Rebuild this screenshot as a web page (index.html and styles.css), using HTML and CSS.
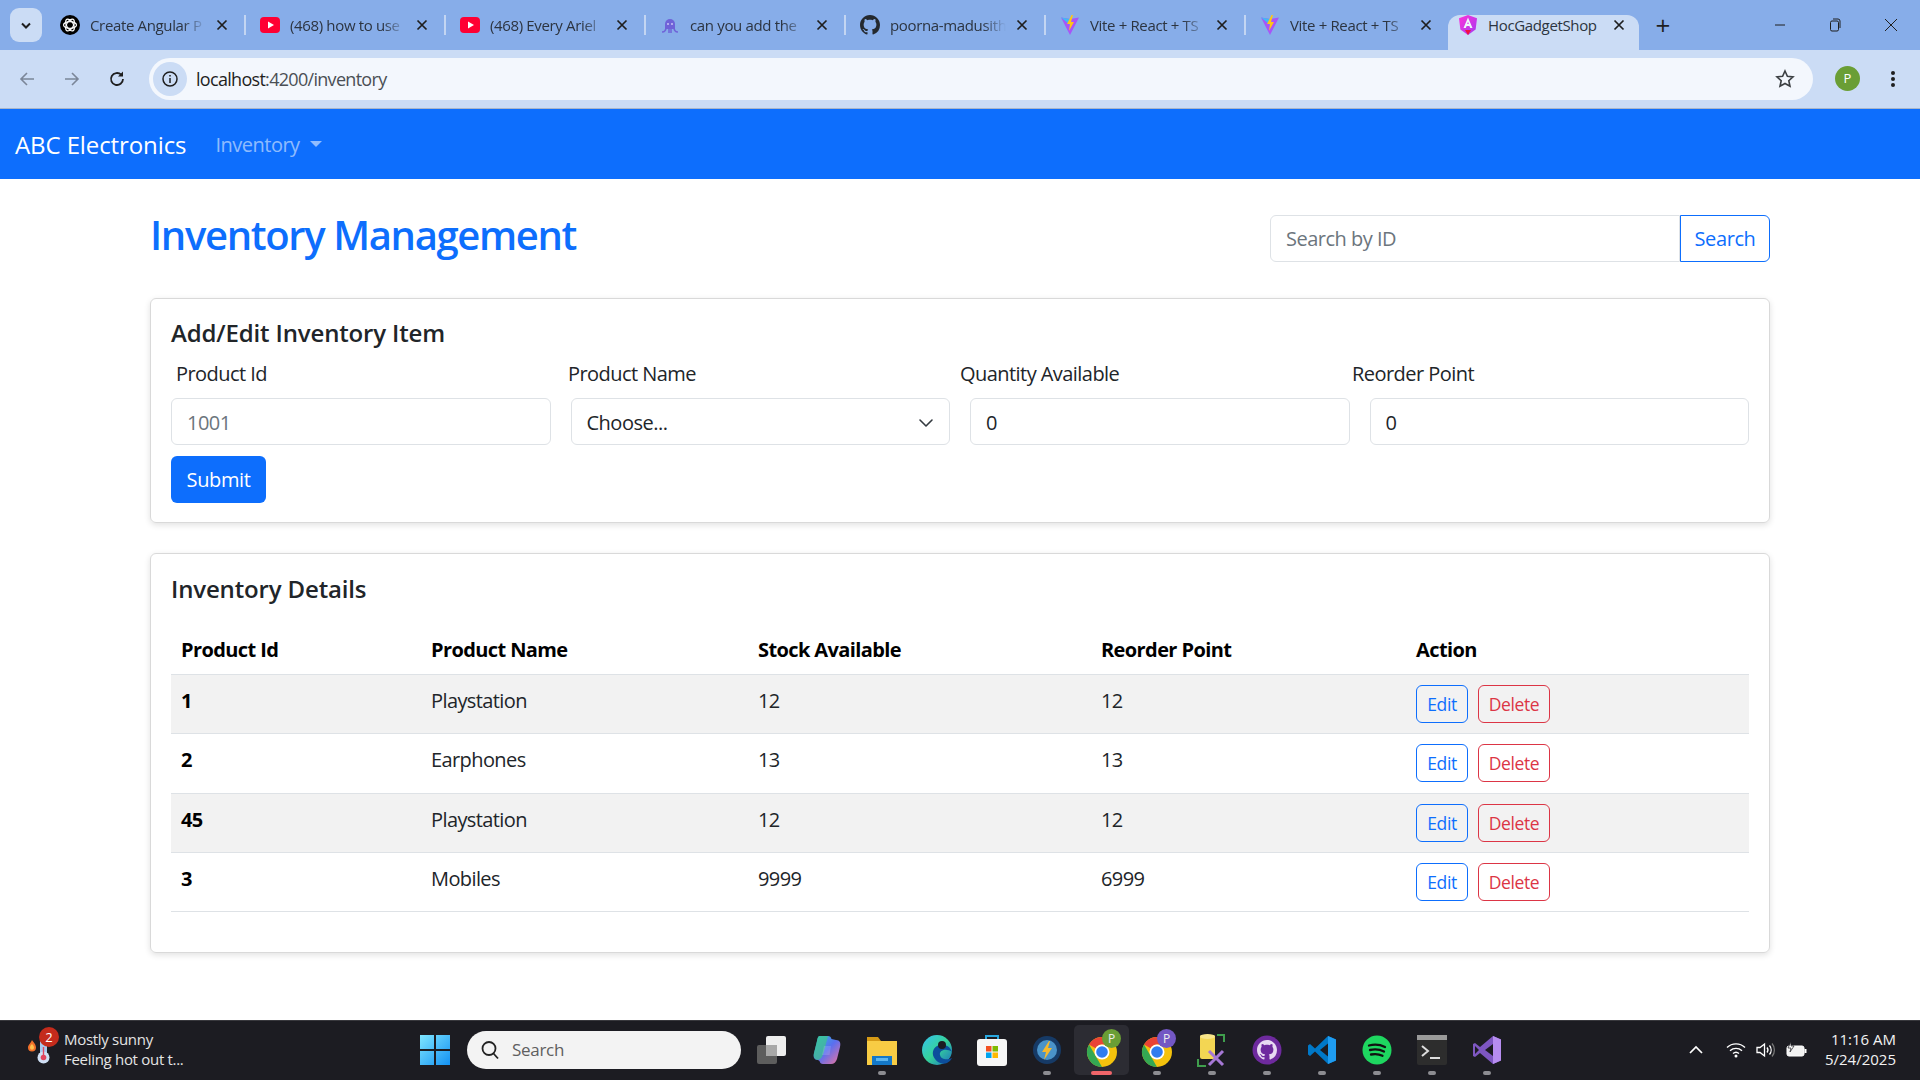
FILE: index.html
```html
<!DOCTYPE html>
<html lang="en">

<head>
  <meta charset="UTF-8">
  <title>HocGadgetShop</title>
  <link rel="stylesheet" href="styles.css">
</head>

<body>
  <svg class="defs" width="0" height="0">
    <symbol id="gh" viewBox="0 0 16 16">
      <path d="M8 0C3.58 0 0 3.58 0 8c0 3.54 2.29 6.53 5.47 7.59.4.07.55-.17.55-.38 0-.19-.01-.82-.01-1.49-2.01.37-2.53-.49-2.69-.94-.09-.23-.48-.94-.82-1.13-.28-.15-.68-.52-.01-.53.63-.01 1.08.58 1.23.82.72 1.21 1.87.87 2.33.66.07-.52.28-.87.51-1.07-1.78-.2-3.64-.89-3.64-3.95 0-.87.31-1.59.82-2.15-.08-.2-.36-1.02.08-2.12 0 0 .67-.21 2.2.82.64-.18 1.32-.27 2-.27.68 0 1.36.09 2 .27 1.53-1.04 2.2-.82 2.2-.82.44 1.1.16 1.92.08 2.12.51.56.82 1.27.82 2.15 0 3.07-1.87 3.75-3.65 3.95.29.25.54.73.54 1.48 0 1.07-.01 1.93-.01 2.2 0 .21.15.46.55.38A8.013 8.013 0 0016 8c0-4.42-3.58-8-8-8z"/>
    </symbol>
    <symbol id="yt" viewBox="0 0 20 20">
      <rect y="2" width="20" height="16" rx="4" fill="#ff0033"/>
      <path d="M8 6.500v7l6-3.500z" fill="#fff"/>
    </symbol>
    <symbol id="vite" viewBox="0 0 20 20">
      <path d="M1 2.500 10 4l9-1.500L10 20z" fill="#a855f7"/>
      <path d="M1 2.500 10 4v6z" fill="#41b9f5"/>
      <path d="M11.500 0 7 9h3l-1 7 5-9h-3l2-7z" fill="#ffc517"/>
    </symbol>
    <symbol id="chrome" viewBox="0 0 32 32">
      <circle cx="16" cy="16" r="15" fill="#f4c20d"/>
      <path d="M16 1a15 15 0 0 1 13 7.500H16a7.500 7.500 0 0 0-6.500 3.750L3 8.500A15 15 0 0 1 16 1z" fill="#ea4335"/>
      <path d="M3 8.500l6.500 11.250L16 31A15 15 0 0 1 3 8.500z" fill="#34a853"/>
      <circle cx="16" cy="16" r="7.500" fill="#fff"/>
      <circle cx="16" cy="16" r="5.800" fill="#2f7cf0"/>
    </symbol>
    <symbol id="x" viewBox="0 0 12 12">
      <path d="M1.500 1.500l9 9M10.500 1.500l-9 9" fill="none" stroke="#1f1f1f" stroke-width="1.700"/>
    </symbol>
  </svg>

  <div class="tabstrip">
    <button class="tab-search">
      <svg width="12" height="8" viewBox="0 0 12 8"><path d="M2 1.500 6 5.500l4-4" fill="none" stroke="#1f1f1f" stroke-width="2"/></svg>
    </button>
    <div class="tabs">
      <div class="tab">
        <svg class="fav" viewBox="0 0 20 20"><circle cx="10" cy="10" r="10" fill="#000"/><g fill="none" stroke="#fff" stroke-width="1.200"><ellipse cx="10" cy="10" rx="6.500" ry="3.400"/><ellipse cx="10" cy="10" rx="6.500" ry="3.400" transform="rotate(60 10 10)"/><ellipse cx="10" cy="10" rx="6.500" ry="3.400" transform="rotate(120 10 10)"/></g></svg>
        <span class="tab-title">Create Angular P</span><svg class="tab-close"><use href="#x"/></svg>
      </div>
      <div class="tab">
        <svg class="fav"><use href="#yt"/></svg>
        <span class="tab-title">(468) how to use</span><svg class="tab-close"><use href="#x"/></svg>
      </div>
      <div class="tab">
        <svg class="fav"><use href="#yt"/></svg>
        <span class="tab-title">(468) Every Ariel</span><svg class="tab-close"><use href="#x"/></svg>
      </div>
      <div class="tab">
        <svg class="fav" viewBox="0 0 20 20"><path d="M5 9a5 5 0 0 1 10 0v5H5z" fill="#6f63d8"/><path d="M6 12c0 3.500-1.500 5-4 5M9 13v5M11 13v5M14 12c0 3.500 1.500 5 4 5" fill="none" stroke="#6f63d8" stroke-width="1.500"/><circle cx="8" cy="9" r="1" fill="#c9c4f5"/><circle cx="12" cy="9" r="1" fill="#c9c4f5"/></svg>
        <span class="tab-title">can you add the</span><svg class="tab-close"><use href="#x"/></svg>
      </div>
      <div class="tab">
        <svg class="fav" fill="#24292f"><use href="#gh"/></svg>
        <span class="tab-title">poorna-madusith</span><svg class="tab-close"><use href="#x"/></svg>
      </div>
      <div class="tab">
        <svg class="fav"><use href="#vite"/></svg>
        <span class="tab-title">Vite + React + TS</span><svg class="tab-close"><use href="#x"/></svg>
      </div>
      <div class="tab tab-last">
        <svg class="fav"><use href="#vite"/></svg>
        <span class="tab-title">Vite + React + TS</span><svg class="tab-close"><use href="#x"/></svg>
      </div>
      <div class="tab tab-active">
        <svg class="fav" viewBox="0 0 20 20"><defs><linearGradient id="ng" x1="0" y1="0" x2="1" y2="1"><stop offset="0" stop-color="#ff31d9"/><stop offset="1" stop-color="#a33bf0"/></linearGradient></defs><path d="M10 0 1 3.200l1.400 11.300L10 20l7.600-5.500L19 3.200z" fill="url(#ng)"/><path d="M10 2.500 5.500 13h2.300l.8-2h2.800l.8 2h2.300z" fill="#eef3fb"/><path d="M7 15h6l-3 5z" fill="#f0123f"/><path d="M9.200 9 10 6.800l.8 2.200z" fill="#d43de8"/></svg>
        <span class="tab-title">HocGadgetShop</span><svg class="tab-close"><use href="#x"/></svg>
      </div>
      <div class="tab-new">+</div>
    </div>
    <div class="win-btns">
      <svg width="12" height="12" viewBox="0 0 12 12"><path d="M1 6h10" stroke="#1f1f1f"/></svg>
      <svg width="12" height="14" viewBox="0 0 12 14"><rect x="1.500" y="3" width="8" height="10" rx="1.500" fill="none" stroke="#1f1f1f"/><path d="M4 1h5a2 2 0 0 1 2 2v7" fill="none" stroke="#1f1f1f"/></svg>
      <svg width="14" height="14" viewBox="0 0 14 14"><path d="M1 1l12 12M13 1 1 13" stroke="#1f1f1f"/></svg>
    </div>
  </div>

  <div class="toolbar">
    <svg class="tool-icon" width="18" height="18" viewBox="0 0 18 18"><path d="M16 9H3M9 3 3 9l6 6" fill="none" stroke="#7b8698" stroke-width="1.600"/></svg>
    <svg class="tool-icon" width="18" height="18" viewBox="0 0 18 18"><path d="M2 9h13M9 3l6 6-6 6" fill="none" stroke="#7b8698" stroke-width="1.600"/></svg>
    <svg class="tool-icon" width="18" height="18" viewBox="0 0 18 18"><path d="M15 9a6 6 0 1 1-1.800-4.300" fill="none" stroke="#1f1f1f" stroke-width="1.800"/><path d="M15 1.500V6.500h-5z" fill="#1f1f1f"/></svg>
    <div class="omnibox">
      <span class="site-info">
        <svg width="18" height="18" viewBox="0 0 18 18"><circle cx="9" cy="9" r="7" fill="none" stroke="#1f1f1f" stroke-width="1.500"/><path d="M9 8v5M9 5v1.500" stroke="#1f1f1f" stroke-width="1.500"/></svg>
      </span>
      <span class="url"><b>localhost</b>:4200/inventory</span>
      <svg width="20" height="20" viewBox="0 0 20 20"><path d="m10 2 2.400 5.300 5.600.6-4.200 3.800 1.200 5.600L10 14.500l-5 2.800 1.200-5.600L2 7.900l5.600-.6z" fill="none" stroke="#3c4043" stroke-width="1.600"/></svg>
    </div>
    <span class="avatar">P</span>
    <svg class="menu-dots" width="4" height="18" viewBox="0 0 4 18"><circle cx="2" cy="3" r="2"/><circle cx="2" cy="9" r="2"/><circle cx="2" cy="15" r="2"/></svg>
  </div>

  <nav class="navbar">
    <a class="brand">ABC Electronics</a>
    <a class="nav-link">Inventory<i class="caret"></i></a>
  </nav>

  <main class="page">
    <div class="page-head">
      <h1>Inventory Management</h1>
      <div class="search-group">
        <input class="field search-input" type="text" placeholder="Search by ID">
        <button class="btn btn-outline-blue search-btn">Search</button>
      </div>
    </div>

    <section class="card card-form">
      <h2>Add/Edit Inventory Item</h2>
      <div class="label-row">
        <label>Product Id</label>
        <label>Product Name</label>
        <label>Quantity Available</label>
        <label>Reorder Point</label>
      </div>
      <div class="input-row">
        <input class="field" type="text" placeholder="1001">
        <div class="field select-field">Choose...
          <svg width="16" height="16" viewBox="0 0 16 16"><path d="M2 5l6 6 6-6" fill="none" stroke="#343a40" stroke-width="1.600" stroke-linecap="round" stroke-linejoin="round"/></svg>
        </div>
        <input class="field" type="text" value="0">
        <input class="field" type="text" value="0">
      </div>
      <button class="btn btn-blue">Submit</button>
    </section>

    <section class="card card-table">
      <h2>Inventory Details</h2>
      <table class="inv-table">
        <thead>
          <tr>
            <th>Product Id</th>
            <th>Product Name</th>
            <th>Stock Available</th>
            <th>Reorder Point</th>
            <th>Action</th>
          </tr>
        </thead>
        <tbody>
          <tr>
            <th>1</th>
            <td>Playstation</td>
            <td>12</td>
            <td>12</td>
            <td><button class="btn btn-sm btn-outline-blue">Edit</button><button class="btn btn-sm btn-outline-red">Delete</button></td>
          </tr>
          <tr>
            <th>2</th>
            <td>Earphones</td>
            <td>13</td>
            <td>13</td>
            <td><button class="btn btn-sm btn-outline-blue">Edit</button><button class="btn btn-sm btn-outline-red">Delete</button></td>
          </tr>
          <tr>
            <th>45</th>
            <td>Playstation</td>
            <td>12</td>
            <td>12</td>
            <td><button class="btn btn-sm btn-outline-blue">Edit</button><button class="btn btn-sm btn-outline-red">Delete</button></td>
          </tr>
          <tr>
            <th>3</th>
            <td>Mobiles</td>
            <td>9999</td>
            <td>6999</td>
            <td><button class="btn btn-sm btn-outline-blue">Edit</button><button class="btn btn-sm btn-outline-red">Delete</button></td>
          </tr>
        </tbody>
      </table>
    </section>
  </main>

  <footer class="taskbar">
    <div class="weather">
      <span class="weather-icon">
        <svg width="26" height="34" viewBox="0 0 26 34"><path d="M6 7c1 2 4 4 4 7.500a4 4 0 0 1-8 0C2 12 5 10 6 7z" fill="#f0702a"/><path d="M6 11c.8 1 2 2 2 3.800a2 2 0 0 1-4 0C4 13 5 12 6 11z" fill="#ffc04d"/><rect x="14" y="5" width="7" height="20" rx="3.500" fill="#a8c8ee"/><circle cx="17.500" cy="24.500" r="6" fill="#cfe0f5"/><circle cx="17.500" cy="24.500" r="2.800" fill="#e0455f"/><rect x="16.800" y="14" width="1.400" height="9" fill="#e0455f"/></svg>
        <span class="weather-badge">2</span>
      </span>
      <div class="weather-text">
        <span>Mostly sunny</span>
        <span>Feeling hot out t...</span>
      </div>
    </div>

    <div class="task-center">
      <svg class="win-logo" width="30" height="30" viewBox="0 0 30 30"><defs><linearGradient id="win" x1="0" y1="0" x2="1" y2="1"><stop offset="0" stop-color="#7fe6ff"/><stop offset="1" stop-color="#1391f2"/></linearGradient></defs><path d="M0 0h14v14H0zM16 0h14v14H16zM0 16h14v14H0zM16 16h14v14H16z" fill="url(#win)"/></svg>
      <div class="task-search">
        <svg width="20" height="20" viewBox="0 0 20 20"><circle cx="9" cy="8.500" r="6.500" fill="none" stroke="#222" stroke-width="1.800"/><path d="m13.500 13.500 4.500 5" stroke="#222" stroke-width="1.800"/></svg>
        <span>Search</span>
      </div>
      <div class="task-icon">
        <svg width="30" height="30" viewBox="0 0 30 30"><rect y="10" width="20" height="19" rx="2" fill="#5d5d5d"/><rect x="9" y="1" width="20" height="20" rx="2" fill="#eee"/><rect x="9" y="10" width="11" height="11" fill="#a8a8a8"/></svg>
      </div>
      <div class="task-icon">
        <svg width="32" height="32" viewBox="0 0 32 32"><defs><linearGradient id="cop" x1="0" y1="0" x2="1" y2="1"><stop offset="0" stop-color="#27c5d8"/><stop offset=".5" stop-color="#5a6ff0"/><stop offset="1" stop-color="#f0739a"/></linearGradient></defs><path d="M9 2h8c2 0 3 1 3.500 3L25 6c4 0 5 3 4 7l-3 12c-1 3-3 5-6 5h-8c-2 0-3-1-3.500-3L7 26c-4 0-5-3-4-7L6 7c.5-3 1-5 3-5z" fill="url(#cop)"/><path d="M3 19 6 7c.5-3 1-5 3-5h8L13 17c-1 4-2 8-6 9-3 0-5-3-4-7z" fill="#3fc88a" opacity=".7"/><path d="M13 12h7l-1.500 9H11z" fill="#fff" opacity=".15"/></svg>
      </div>
      <div class="task-icon">
        <svg width="32" height="32" viewBox="0 0 32 32"><path d="M1 3h11l3 4H1z" fill="#d69a16"/><rect x="1" y="7" width="30" height="24" fill="#f8cc44"/><path d="M6 22h20v9H6z" fill="#1478c8"/><rect x="10" y="24" width="12" height="3" fill="#5db6ef"/></svg>
        <i class="run-dot"></i>
      </div>
      <div class="task-icon">
        <svg width="32" height="32" viewBox="0 0 32 32"><defs><linearGradient id="edge" x1="0" y1="0" x2="1" y2="1"><stop offset="0" stop-color="#35c1f1"/><stop offset=".5" stop-color="#36d399"/><stop offset="1" stop-color="#1b6ec2"/></linearGradient></defs><circle cx="16" cy="16" r="15" fill="url(#edge)"/><path d="M31 18c-2-7-10-9-15-6-4 2-6 8-2 13 2 3 7 6 12 4 2-1 4-3 5-5-4 2-11 2-12-3-1-3 3-6 7-5 3 0 4 1 5 2z" fill="#0c4e9c"/><circle cx="21" cy="11" r="4" fill="#1c1c22"/></svg>
      </div>
      <div class="task-icon">
        <svg width="30" height="34" viewBox="0 0 30 34"><path d="M9 7V3h12v4" fill="none" stroke="#29a8e0" stroke-width="2"/><rect y="6" width="30" height="27" rx="3" fill="#f6f6f6"/><rect x="9" y="13" width="5.500" height="5.500" fill="#f25022"/><rect x="15.500" y="13" width="5.500" height="5.500" fill="#7fba00"/><rect x="9" y="19.500" width="5.500" height="5.500" fill="#00a4ef"/><rect x="15.500" y="19.500" width="5.500" height="5.500" fill="#ffb900"/></svg>
      </div>
      <div class="task-icon">
        <svg width="30" height="30" viewBox="0 0 30 30"><circle cx="15" cy="15" r="14" fill="#163a66"/><circle cx="15" cy="15" r="10" fill="#4a93c9"/><path d="M17 6 10 17h4l-2 8 8-12h-4l2-7z" fill="#f5b92e"/></svg>
        <i class="run-dot"></i>
      </div>
      <div class="task-icon task-active">
        <svg class="chrome" width="32" height="32"><use href="#chrome"/></svg>
        <span class="profile-badge badge-green">P</span>
        <i class="run-dot dot-red"></i>
      </div>
      <div class="task-icon">
        <svg class="chrome" width="32" height="32"><use href="#chrome"/></svg>
        <span class="profile-badge badge-purple">P</span>
        <i class="run-dot"></i>
      </div>
      <div class="task-icon">
        <svg width="30" height="34" viewBox="0 0 30 34"><path d="M1 26v7h8M20 2h7v7" fill="none" stroke="#3f9e4d" stroke-width="2"/><rect x="3" y="2" width="15" height="24" rx="2" fill="#f3d653"/><ellipse cx="10.500" cy="3.500" rx="7.500" ry="2.500" fill="#f8e58a"/><path d="m12 18 14 14M26 18 12 32" stroke="#a678d6" stroke-width="3"/></svg>
        <i class="run-dot"></i>
      </div>
      <div class="task-icon">
        <svg width="30" height="30" viewBox="0 0 30 30"><circle cx="15" cy="15" r="14.500" fill="#6e2a9e"/><svg x="5" y="5" width="20" height="20" fill="#e8daf2"><use href="#gh"/></svg></svg>
        <i class="run-dot"></i>
      </div>
      <div class="task-icon">
        <svg width="30" height="30" viewBox="0 0 30 30"><path d="M21 1 29 4.500v21L21 29 8 16.500 3 21l-2-1.500V10.500L3 9l5 4.500z" fill="#0078c8"/><path d="M21 1 29 4.500v21L21 29z" fill="#1f9cf0"/><path d="M21 8.500 13 15l8 6.500z" fill="#1c1c22"/></svg>
        <i class="run-dot"></i>
      </div>
      <div class="task-icon">
        <svg width="30" height="30" viewBox="0 0 30 30"><circle cx="15" cy="15" r="14.500" fill="#1ed760"/><path d="M7 10.500c6-1.500 11-1 16 1.500M8 15c5-1 9.500-.8 14 1.500M9 19.500c4-.8 8-.5 11.500 1.300" fill="none" stroke="#111" stroke-width="2.300" stroke-linecap="round"/></svg>
        <i class="run-dot"></i>
      </div>
      <div class="task-icon">
        <svg width="30" height="30" viewBox="0 0 30 30"><rect width="30" height="30" rx="2" fill="#2d2d2d"/><rect width="30" height="5" fill="#9a9a9a"/><path d="m5 11 6 5-6 5" fill="none" stroke="#ddd" stroke-width="2"/><path d="M13 23h10" stroke="#ddd" stroke-width="2"/></svg>
        <i class="run-dot"></i>
      </div>
      <div class="task-icon">
        <svg width="30" height="30" viewBox="0 0 30 30"><path d="M21 1 29 4.500v21L21 29 8 18 3 22l-2-1V9l2-1 5 4z" fill="#7e57c2"/><path d="M21 1 29 4.500v21L21 29z" fill="#b78df0"/><path d="M21 9 13 15l8 6zM3 11v8l4-4z" fill="#1c1c22"/></svg>
        <i class="run-dot"></i>
      </div>
    </div>

    <div class="tray">
      <svg width="14" height="9" viewBox="0 0 14 9"><path d="M1 8l6-6 6 6" fill="none" stroke="#fff" stroke-width="1.700"/></svg>
      <svg class="tray-wifi" width="20" height="16" viewBox="0 0 20 16"><path d="M1 5.500a13 13 0 0 1 18 0M4 8.700a9 9 0 0 1 12 0M7 11.500a4.500 4.500 0 0 1 6 0" fill="none" stroke="#fff" stroke-width="1.400"/><circle cx="10" cy="14" r="1.500" fill="#fff"/></svg>
      <svg class="tray-vol" width="20" height="16" viewBox="0 0 20 16"><path d="M1 5.500h3L8.500 2v12L4 10.500H1z" fill="none" stroke="#fff" stroke-width="1.300"/><path d="M11 5.500a4 4 0 0 1 0 5M13.500 3.500a7 7 0 0 1 0 9" fill="none" stroke="#fff" stroke-width="1.300"/><path d="M16 1.500a10 10 0 0 1 0 13" fill="none" stroke="#777" stroke-width="1.300"/></svg>
      <svg class="tray-batt" width="21" height="16" viewBox="0 0 21 16"><rect x="1" y="4" width="17" height="10" rx="2" fill="#f2f2f2" stroke="#fff"/><rect x="18.500" y="7" width="2" height="4" fill="#fff"/><path d="M5 0 2 6h3l-1 4 4-6H5z" fill="#fff" stroke="#1c1c22" stroke-width=".7"/></svg>
      <div class="clock">
        <span>11:16 AM</span>
        <span>5/24/2025</span>
      </div>
    </div>
  </footer>
</body>

</html>
```

FILE: styles.css
```css
* {
  box-sizing: border-box;
}

html,
body {
  margin: 0;
  height: 1080px;
  overflow: hidden;
}

body {
  display: flex;
  flex-direction: column;
  background-color: #fff;
  color: #212529;
  font-family: "Open Sans", "Noto Sans", sans-serif;
}

.defs {
  position: absolute;
}

/* browser chrome */
.tabstrip {
  height: 50px;
  flex: none;
  display: flex;
  align-items: flex-end;
  background-color: #87ade9;
}

.tab-search {
  width: 32px;
  height: 34px;
  margin: 0 4px 8px 10px;
  padding: 0;
  flex: none;
  border: none;
  border-radius: 9px;
  background-color: #cbdcf5;
}

.tabs {
  display: flex;
  align-items: flex-end;
}

.tab {
  width: 200px;
  height: 20px;
  margin-bottom: 15px;
  padding: 0 16px 0 14px;
  display: flex;
  align-items: center;
  gap: 10px;
  border-right: 2px solid #c3d5f2;
  font-size: 15px;
  color: #2c3440;
}

.tab-last {
  width: 202px;
  border-right: none;
}

.tab-active {
  width: 191px;
  height: 35px;
  margin: 0;
  padding: 0 14px 15px 10px;
  background-color: #cbdcf5;
  border: none;
  border-radius: 12px 12px 0 0;
}

.fav {
  width: 20px;
  height: 20px;
  flex: none;
}

.tab-title {
  flex: 1;
  overflow: hidden;
  white-space: nowrap;
  letter-spacing: -0.35px;
  -webkit-mask-image: linear-gradient(to right, #000 80%, transparent 100%);
  mask-image: linear-gradient(to right, #000 80%, transparent 100%);
}

.tab-active .tab-title {
  -webkit-mask-image: none;
  mask-image: none;
}

.tab-close {
  width: 12px;
  height: 12px;
  flex: none;
}

.tab-new {
  width: 48px;
  height: 44px;
  margin-bottom: 0;
  padding-bottom: 6px;
  text-align: center;
  font-size: 26px;
  line-height: 38px;
  color: #1f1f1f;
}

.win-btns {
  margin-left: auto;
  width: 170px;
  height: 50px;
  padding: 0 22px 0 24px;
  display: flex;
  align-items: center;
  justify-content: space-between;
}

.toolbar {
  height: 59px;
  flex: none;
  padding: 0 20px 1px 18px;
  display: flex;
  align-items: center;
  background-color: #cbdcf5;
  border-bottom: 1px solid #a9b6ca;
}

.tool-icon {
  margin-right: 27px;
  flex: none;
}

.tool-icon:nth-child(3) {
  margin-right: 23px;
}

.omnibox {
  width: 1664px;
  height: 42px;
  padding: 0 18px 0 4px;
  flex: none;
  display: flex;
  align-items: center;
  border-radius: 21px;
  background-color: #f3f7fd;
}

.site-info {
  width: 34px;
  height: 34px;
  display: flex;
  align-items: center;
  justify-content: center;
  border-radius: 50%;
  background-color: #cbdcf5;
}

.url {
  margin-left: 9px;
  flex: 1;
  font-size: 18px;
  letter-spacing: -0.7px;
  color: #4a4f55;
}

.url b {
  font-weight: 400;
  color: #1f1f1f;
}

.avatar {
  width: 25px;
  height: 25px;
  margin-left: 22px;
  flex: none;
  border-radius: 50%;
  background-color: #6a9e35;
  color: #fff;
  font-size: 13px;
  line-height: 25px;
  text-align: center;
}

.menu-dots {
  margin-left: 31px;
  fill: #1f1f1f;
}

/* app */
.navbar {
  height: 70px;
  flex: none;
  padding: 0 15px;
  display: flex;
  align-items: center;
  background-color: #0d6efd;
}

.brand {
  font-size: 24px;
  letter-spacing: -0.1px;
  color: #fff;
}

.nav-link {
  margin-left: 29px;
  display: flex;
  align-items: center;
  font-size: 20px;
  letter-spacing: -0.5px;
  color: rgba(255, 255, 255, 0.55);
}

.caret {
  width: 0;
  height: 0;
  margin-left: 10px;
  border-top: 6px solid rgba(255, 255, 255, 0.55);
  border-left: 6px solid transparent;
  border-right: 6px solid transparent;
}

.page {
  flex: 1;
  width: 1620px;
  margin: 0 auto;
  padding-top: 32px;
}

.page-head {
  display: flex;
  align-items: center;
  justify-content: space-between;
  margin-bottom: 33px;
}

h1 {
  margin: 0 0 6px;
  font-size: 40px;
  font-weight: 600;
  line-height: 1.2;
  letter-spacing: -1.35px;
  color: #0d6efd;
}

.search-group {
  display: flex;
  width: 500px;
}

.field {
  height: 47px;
  width: 100%;
  padding: 0 15px;
  border: 1px solid #dee2e6;
  border-radius: 6px;
  background-color: #fff;
  color: #212529;
  font-family: inherit;
  font-size: 20px;
  letter-spacing: -0.5px;
}

.field::placeholder {
  color: #6c757d;
}

.search-input {
  width: 410px;
  border-radius: 6px 0 0 6px;
}

.select-field {
  display: flex;
  align-items: center;
  justify-content: space-between;
}

.btn {
  font-family: inherit;
  font-size: 20px;
  letter-spacing: -0.4px;
  border-radius: 6px;
  border: 1px solid transparent;
  background: none;
}

.btn-blue {
  width: 95px;
  height: 47px;
  padding: 0;
  background-color: #0d6efd;
  color: #fff;
}

.btn-outline-blue {
  border-color: #0d6efd;
  color: #0d6efd;
}

.btn-outline-red {
  border-color: #dc3545;
  color: #dc3545;
}

.search-btn {
  width: 90px;
  height: 47px;
  padding: 0;
  border-radius: 0 6px 6px 0;
}

.btn-sm {
  height: 38px;
  padding: 0;
  font-size: 17.500px;
  width: 52px;
}

.btn-outline-red {
  width: 72px;
  margin-left: 10px;
}

.card {
  margin-bottom: 30px;
  padding: 20px;
  border: 1px solid #d9d9d9;
  border-radius: 6px;
  box-shadow: 0 2px 6px rgba(0, 0, 0, 0.12);
}

.card-form {
  padding-top: 19px;
  padding-bottom: 19px;
}

.card h2 {
  margin: 0;
  font-size: 24px;
  font-weight: 600;
  line-height: 29px;
  letter-spacing: -0.15px;
  color: #212529;
}

.label-row {
  margin-top: 13px;
  padding-left: 5px;
  display: grid;
  grid-template-columns: repeat(4, 392px);
}

.label-row label {
  font-size: 20px;
  line-height: 27px;
  letter-spacing: -0.55px;
}

.input-row {
  margin: 11px 0 11px;
  display: grid;
  grid-template-columns: repeat(4, 1fr);
  gap: 20px;
}

.input-row .field {
  padding-top: 2px;
}

.card-table {
  padding-bottom: 40px;
  margin-bottom: 0;
}

.inv-table {
  width: 100%;
  margin-top: 22px;
  border-collapse: collapse;
  table-layout: fixed;
  font-size: 20px;
  letter-spacing: -0.6px;
}

.inv-table th,
.inv-table td {
  height: 59px;
  padding: 0 10px;
  text-align: left;
  border-bottom: 1px solid #dee2e6;
  color: #000;
}

.inv-table tbody tr:nth-child(2) th,
.inv-table tbody tr:nth-child(2) td {
  height: 60px;
}

.inv-table thead th {
  height: 49px;
  padding-bottom: 0;
  color: #000;
}

.inv-table tbody th,
.inv-table tbody td {
  padding-top: 0;
  padding-bottom: 7px;
}

.inv-table tbody td:last-child {
  padding-bottom: 0;
}

.inv-table tbody td {
  font-weight: 400;
  color: #212529;
}

.inv-table tbody tr:nth-child(odd) {
  background-color: #f2f2f2;
}

.inv-table th:nth-child(1) {
  width: 250px;
}

.inv-table th:nth-child(2) {
  width: 327px;
}

.inv-table th:nth-child(3) {
  width: 343px;
}

.inv-table th:nth-child(4) {
  width: 315px;
}

/* windows taskbar */
.taskbar {
  height: 60px;
  padding-bottom: 2px;
  flex: none;
  display: flex;
  align-items: center;
  position: relative;
  background-color: #1c1c22;
  border-top: 1px solid #38383d;
  color: #fff;
}

.weather {
  width: 420px;
  padding-left: 26px;
  flex: none;
  display: flex;
  align-items: center;
  gap: 12px;
}

.weather-icon {
  position: relative;
  width: 26px;
  height: 34px;
}

.weather-badge {
  position: absolute;
  top: -6px;
  left: 13px;
  width: 20px;
  height: 20px;
  border-radius: 50%;
  background-color: #c42b1c;
  font-size: 13px;
  line-height: 20px;
  text-align: center;
}

.weather-text {
  padding-bottom: 2px;
  display: flex;
  flex-direction: column;
  font-size: 15px;
  line-height: 20px;
  letter-spacing: -0.3px;
  color: #e4e4e4;
}

.task-center {
  display: flex;
  align-items: center;
  height: 100%;
}

.win-logo {
  margin-right: 17px;
  flex: none;
}

.task-search {
  width: 274px;
  height: 38px;
  margin-right: 3px;
  padding-left: 13px;
  flex: none;
  display: flex;
  align-items: center;
  gap: 12px;
  border-radius: 19px;
  background-color: #f3f3f3;
  color: #5f5f5f;
  font-size: 17px;
  letter-spacing: -0.3px;
}

.task-icon {
  position: relative;
  width: 55px;
  height: 50px;
  flex: none;
  display: flex;
  align-items: center;
  justify-content: center;
  border-radius: 5px;
}

.task-active {
  background-color: #2c2c33;
}

.run-dot {
  position: absolute;
  bottom: 0;
  left: 24px;
  width: 8px;
  height: 4px;
  border-radius: 2px;
  background-color: #8d8d92;
}

.dot-red {
  left: 17px;
  width: 21px;
  background-color: #f0656a;
}

.chrome {
  margin-top: 4px;
}

.profile-badge {
  position: absolute;
  top: 4px;
  left: 28px;
  width: 19px;
  height: 19px;
  border-radius: 50%;
  color: #eee;
  font-size: 12px;
  line-height: 19px;
  text-align: center;
}

.badge-green {
  background-color: #6a9e35;
}

.badge-purple {
  background-color: #7357c4;
}

.tray {
  margin-left: auto;
  padding-right: 24px;
  display: flex;
  align-items: center;
}

.tray-wifi {
  margin-left: 23px;
}

.tray-vol {
  margin-left: 10px;
}

.tray-batt {
  margin-left: 10px;
}

.clock {
  margin-left: 18px;
  padding-bottom: 1px;
  display: flex;
  flex-direction: column;
  align-items: flex-end;
  font-size: 15px;
  line-height: 20px;
  color: #f2f2f2;
}
```
